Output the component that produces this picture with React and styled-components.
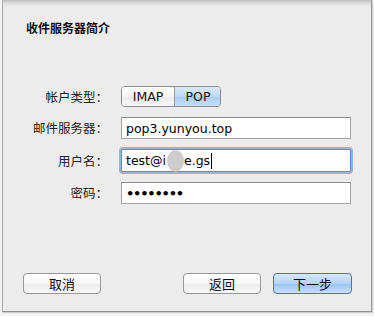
import React from "react";
import styled, { createGlobalStyle } from "styled-components";

const GlobalStyle = createGlobalStyle`
  html, body {
    margin: 0;
    padding: 0;
    background: #f3f3f3;
  }
`;

const Page = styled.div`
  width: 374px;
  height: 316px;
  overflow: hidden;
  background: #f3f3f3;
`;

const Dialog = styled.div`
  box-sizing: border-box;
  margin-left: 2px;
  width: 370px;
  height: 312px;
  display: flex;
  flex-direction: column;
  background: linear-gradient(#bdbdbd 0, #dcdcdc 3px, #ececec 7px, #ececec 100%);
  border-left: 1px solid #a9a9a9;
  border-right: 1px solid #979797;
  border-bottom: 1px solid #8f8f8f;
  box-shadow: 1px 1px 1px rgba(0, 0, 0, 0.15);
  font-family: "DejaVu Sans", "Noto Sans CJK SC", sans-serif;
  color: #111;
`;

const Title = styled.div`
  padding: 20px 0 0 23px;
  height: 16px;
  line-height: 16px;
  font-family: "Noto Sans CJK SC", sans-serif;
  font-size: 12px;
  font-weight: bold;
  color: #111;
`;

const Form = styled.div`
  margin-top: 50px;
  display: grid;
  grid-template-columns: 105px 230px;
  column-gap: 13px;
  row-gap: 10px;
  align-items: center;
`;

const Label = styled.div`
  text-align: right;
  font-family: "Noto Sans CJK SC", sans-serif;
  font-size: 12.5px;
  color: #222;
  line-height: 16px;
`;

const Segmented = styled.div`
  display: flex;
  height: 21px;
  box-sizing: border-box;
  border: 1px solid #8b8b8b;
  border-radius: 4px;
  overflow: hidden;
  width: 100px;
`;

const Segment = styled.div`
  flex: 0 0 ${(p) => p.$w}px;
  display: flex;
  align-items: center;
  justify-content: center;
  font-size: 12.5px;
  color: #111;
  border-left: ${(p) => (p.$first ? "none" : "1px solid #9a9a9a")};
  background: ${(p) =>
    p.$active
      ? "linear-gradient(#dbeafb 0%, #bcd9f6 50%, #a9cdf3 51%, #c4def8 100%)"
      : "linear-gradient(#ffffff 0%, #f5f5f5 50%, #ebebeb 51%, #f7f7f7 100%)"};
`;

const Field = styled.div`
  position: relative;
  box-sizing: border-box;
  height: ${(p) => (p.$focused ? "23px" : "22px")};
  display: flex;
  align-items: center;
  padding-left: 4px;
  background: #fff;
  border: 1px solid ${(p) => (p.$focused ? "#5c8fd0" : "#a3a3a3")};
  border-top-color: ${(p) => (p.$focused ? "#5c8fd0" : "#8a8a8a")};
  box-shadow: ${(p) => (p.$focused ? "0 0 0 2px #8fb6e3" : "none")};
  border-radius: ${(p) => (p.$focused ? "2px" : "0")};
  font-size: 12.5px;
  color: #000;
  white-space: nowrap;
`;

const Blob = styled.span`
  display: inline-block;
  width: 17px;
  height: 22px;
  margin: 0 0 0 1px;
  border-radius: 50%;
  background: #cdcdcd;
  vertical-align: middle;
`;

const Caret = styled.span`
  display: inline-block;
  width: 1px;
  height: 16px;
  margin-left: 1px;
  background: #000;
  vertical-align: middle;
`;

const Dots = styled.span`
  font-size: 13px;
  font-weight: bold;
  letter-spacing: -1.2px;
`;

const Footer = styled.div`
  margin-top: auto;
  margin-bottom: 17px;
  display: flex;
  padding: 0 19px 0 20px;
`;

const Button = styled.div`
  box-sizing: border-box;
  width: ${(p) => p.$w}px;
  height: 21px;
  margin-left: ${(p) => p.$ml || 0}px;
  display: flex;
  align-items: center;
  justify-content: center;
  border-radius: 4px;
  font-family: "Noto Sans CJK SC", sans-serif;
  font-size: 13px;
  color: #111;
  border: 1px solid ${(p) => (p.$primary ? "#5f6fa3" : "#979797")};
  background: ${(p) =>
    p.$primary
      ? "linear-gradient(#d8e8fb 0%, #b4d3f5 50%, #97c2f0 51%, #c9e2fb 100%)"
      : "linear-gradient(#ffffff 0%, #f6f6f6 50%, #ececec 51%, #f8f8f8 100%)"};
`;

export default function App() {
  return (
    <Page>
      <GlobalStyle />
      <Dialog>
        <Title>收件服务器简介</Title>
        <Form>
          <Label>帐户类型：</Label>
          <Segmented>
            <Segment $first $w={52}>IMAP</Segment>
            <Segment $active $w={46}>POP</Segment>
          </Segmented>

          <Label>邮件服务器：</Label>
          <Field>pop3.yunyou.top</Field>

          <Label>用户名：</Label>
          <Field $focused>
            test@i<Blob />e.gs<Caret />
          </Field>

          <Label>密码：</Label>
          <Field>
            <Dots>••••••••</Dots>
          </Field>
        </Form>
        <Footer>
          <Button $w={78}>取消</Button>
          <Button $w={78} $ml={82}>返回</Button>
          <Button $w={79} $ml={12} $primary>下一步</Button>
        </Footer>
      </Dialog>
    </Page>
  );
}
